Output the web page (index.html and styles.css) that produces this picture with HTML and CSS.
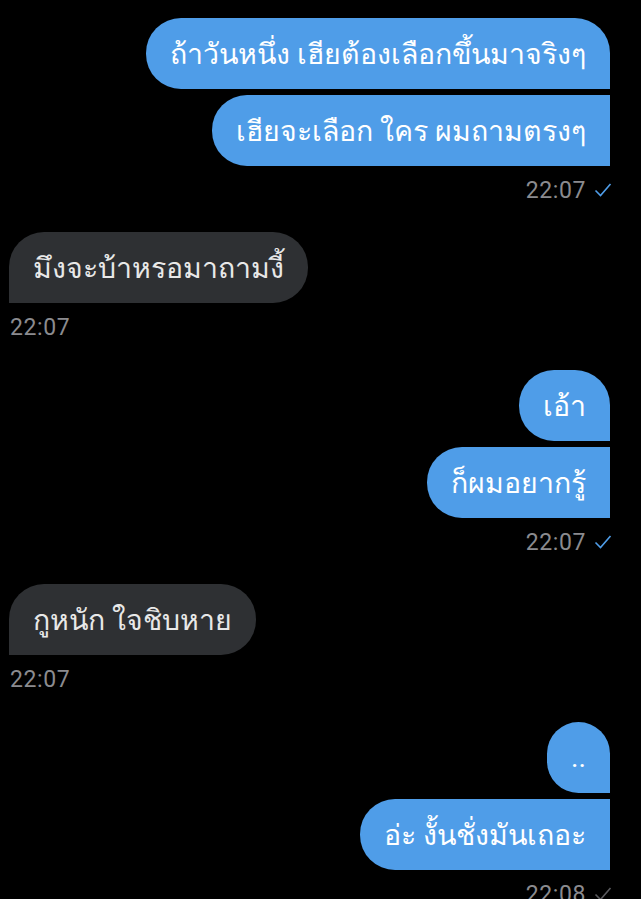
FILE: index.html
```html
<!DOCTYPE html>
<html lang="th">
<head>
    <meta charset="UTF-8">
    <meta name="viewport" content="width=device-width, initial-scale=1.0">
    <title>Chat</title>
    <link rel="stylesheet" href="styles.css">
</head>
<body>
    <div class="chat">
        <div class="group out">
            <div class="bubble first">ถ้าวันหนึ่ง เฮียต้องเลือกขึ้นมาจริงๆ</div>
            <div class="bubble last">เฮียจะเลือก ใคร ผมถามตรงๆ</div>
            <div class="meta">22:07
                <svg class="tick" viewBox="0 0 18 16"><path d="M1.5 8.5 L6.5 13.5 L16.5 2"/></svg>
            </div>
        </div>

        <div class="group in">
            <div class="bubble first last">มึงจะบ้าหรอมาถามงี้</div>
            <div class="meta">22:07</div>
        </div>

        <div class="group out">
            <div class="bubble first">เอ้า</div>
            <div class="bubble last">ก็ผมอยากรู้</div>
            <div class="meta">22:07
                <svg class="tick" viewBox="0 0 18 16"><path d="M1.5 8.5 L6.5 13.5 L16.5 2"/></svg>
            </div>
        </div>

        <div class="group in">
            <div class="bubble first last">กูหนัก ใจชิบหาย</div>
            <div class="meta">22:07</div>
        </div>

        <div class="group out">
            <div class="bubble first">..</div>
            <div class="bubble last">อ่ะ งั้นชั่งมันเถอะ</div>
            <div class="meta">22:08
                <svg class="tick sent" viewBox="0 0 18 16"><path d="M1.5 8.5 L6.5 13.5 L16.5 2"/></svg>
            </div>
        </div>
    </div>
</body>
</html>
```

FILE: styles.css
```css
* {
    margin: 0;
    padding: 0;
    box-sizing: border-box;
}

body {
    background: #000;
    font-family: Roboto, "Noto Sans", sans-serif;
    overflow: hidden;
}

.chat {
    display: flex;
    flex-direction: column;
    gap: 30px;
    padding: 18px 31px 0 9px;
}

.group {
    display: flex;
    flex-direction: column;
    gap: 6px;
}

.group.out {
    align-items: flex-end;
}

.group.in {
    align-items: flex-start;
    padding-bottom: 1px;
}

.bubble {
    height: 71px;
    display: flex;
    align-items: center;
    padding: 0 24px;
    font-size: 28.5px;
    color: #fff;
    border-radius: 35px;
    white-space: nowrap;
}

.out .bubble {
    background: #4f9de8;
}

.out .bubble.first {
    border-bottom-right-radius: 0;
}

.out .bubble.last {
    border-top-right-radius: 0;
    border-bottom-right-radius: 0;
}

.in .bubble {
    background: #2e3033;
    color: #e8e8e8;
    border-bottom-left-radius: 0;
}

.meta {
    display: flex;
    align-items: center;
    gap: 8px;
    height: 24px;
    margin-top: 6px;
    font-size: 23px;
    letter-spacing: 0.6px;
    color: #8b8b8f;
}

.out .meta {
    margin-right: -2px;
}

.in .meta {
    margin-left: 1px;
}

.tick {
    width: 18px;
    height: 16px;
    fill: none;
    stroke: #4f9de8;
    stroke-width: 1.6;
}

.tick.sent {
    stroke: #5a5a5e;
}
```
